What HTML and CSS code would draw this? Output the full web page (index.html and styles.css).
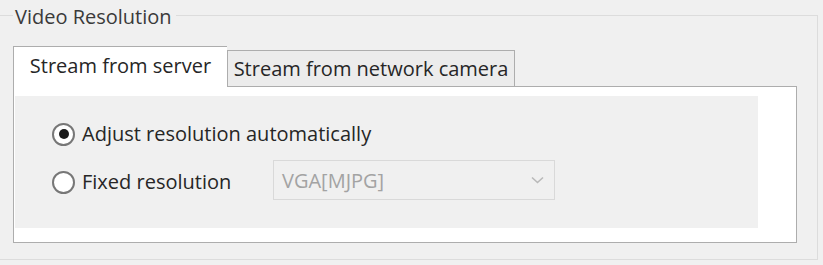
FILE: index.html
```html
<!DOCTYPE html>
<html lang="en">
<head>
    <meta charset="UTF-8">
    <title>Video Resolution</title>
    <link rel="stylesheet" href="styles.css">
</head>
<body>
    <fieldset class="group">
        <legend>Video Resolution</legend>

        <div class="tabs">
            <div class="tab active">Stream from server</div>
            <div class="tab">Stream from network camera</div>
        </div>

        <div class="tab-panel">
            <div class="panel-body">
                <label class="option">
                    <span class="radio checked"></span>
                    <span>Adjust resolution automatically</span>
                </label>
                <div class="option-row">
                    <label class="option option-label">
                        <span class="radio"></span>
                        <span>Fixed resolution</span>
                    </label>
                    <div class="select disabled">
                        <span>VGA[MJPG]</span>
                        <svg class="chevron" width="13" height="8" viewBox="0 0 13 8">
                            <path d="M1 1.5 L6.5 6.5 L12 1.5" fill="none" stroke="#b9b9b9" stroke-width="1.6"/>
                        </svg>
                    </div>
                </div>
            </div>
        </div>
    </fieldset>
</body>
</html>
```

FILE: styles.css
```css
:root {
    --window-bg: #f0f0f0;
    --border: #adadad;
    --group-border: #dcdcdc;
    --text: #262626;
    --disabled: #a3a3a3;
}

html, body {
    margin: 0;
    background-color: var(--window-bg);
}

body {
    font-family: "Open Sans", "Noto Sans", sans-serif;
    font-size: 20px;
    color: var(--text);
    width: 823px;
    height: 265px;
    overflow: hidden;
}

.group {
    margin: 2px 5px 0 -1px;
    padding: 0 0 0 13px;
    height: 258px;
    box-sizing: border-box;
    border: 1px solid var(--group-border);
}

.group legend {
    padding: 4px 4px 0 2px;
    line-height: 22px;
    color: #3a3a3a;
}

.tabs {
    display: flex;
    align-items: flex-end;
    margin-top: 18px;
    height: 40px;
}

.tab {
    box-sizing: border-box;
    height: 36px;
    width: 288px;
    display: flex;
    align-items: center;
    justify-content: center;
    border: 1px solid var(--border);
    border-bottom: none;
    background-color: #ececec;
    white-space: nowrap;
    line-height: 24px;
}

.tab.active {
    width: 214px;
    height: 41px;
    padding-bottom: 2px;
    margin-bottom: -1px;
    background-color: #fff;
    border-right: none;
    position: relative;
    z-index: 1;
}

.tab-panel {
    width: 784px;
    height: 157px;
    box-sizing: border-box;
    border: 1px solid var(--border);
    background-color: #fff;
    padding: 9px 38px 14px 1px;
}

.panel-body {
    height: 100%;
    background-color: var(--window-bg);
    padding: 26px 0 0 37px;
    box-sizing: border-box;
    display: flex;
    flex-direction: column;
    gap: 14px;
}

.option {
    display: flex;
    align-items: center;
    gap: 7px;
    line-height: 24px;
}

.option-row {
    display: flex;
    align-items: center;
}

.option-label {
    width: 221px;
    padding-top: 4px;
}

.radio {
    flex: none;
    width: 23px;
    height: 23px;
    box-sizing: border-box;
    border: 2px solid #777;
    border-radius: 50%;
    background-color: #fff;
    display: flex;
    align-items: center;
    justify-content: center;
}

.radio.checked::after {
    content: "";
    width: 10px;
    height: 10px;
    border-radius: 50%;
    background-color: #1a1a1a;
}

.select {
    width: 282px;
    height: 40px;
    box-sizing: border-box;
    border: 1px solid #d9d9d9;
    display: flex;
    align-items: center;
    justify-content: space-between;
    padding: 0 10px 0 8px;
}

.select.disabled {
    color: var(--disabled);
}
```
